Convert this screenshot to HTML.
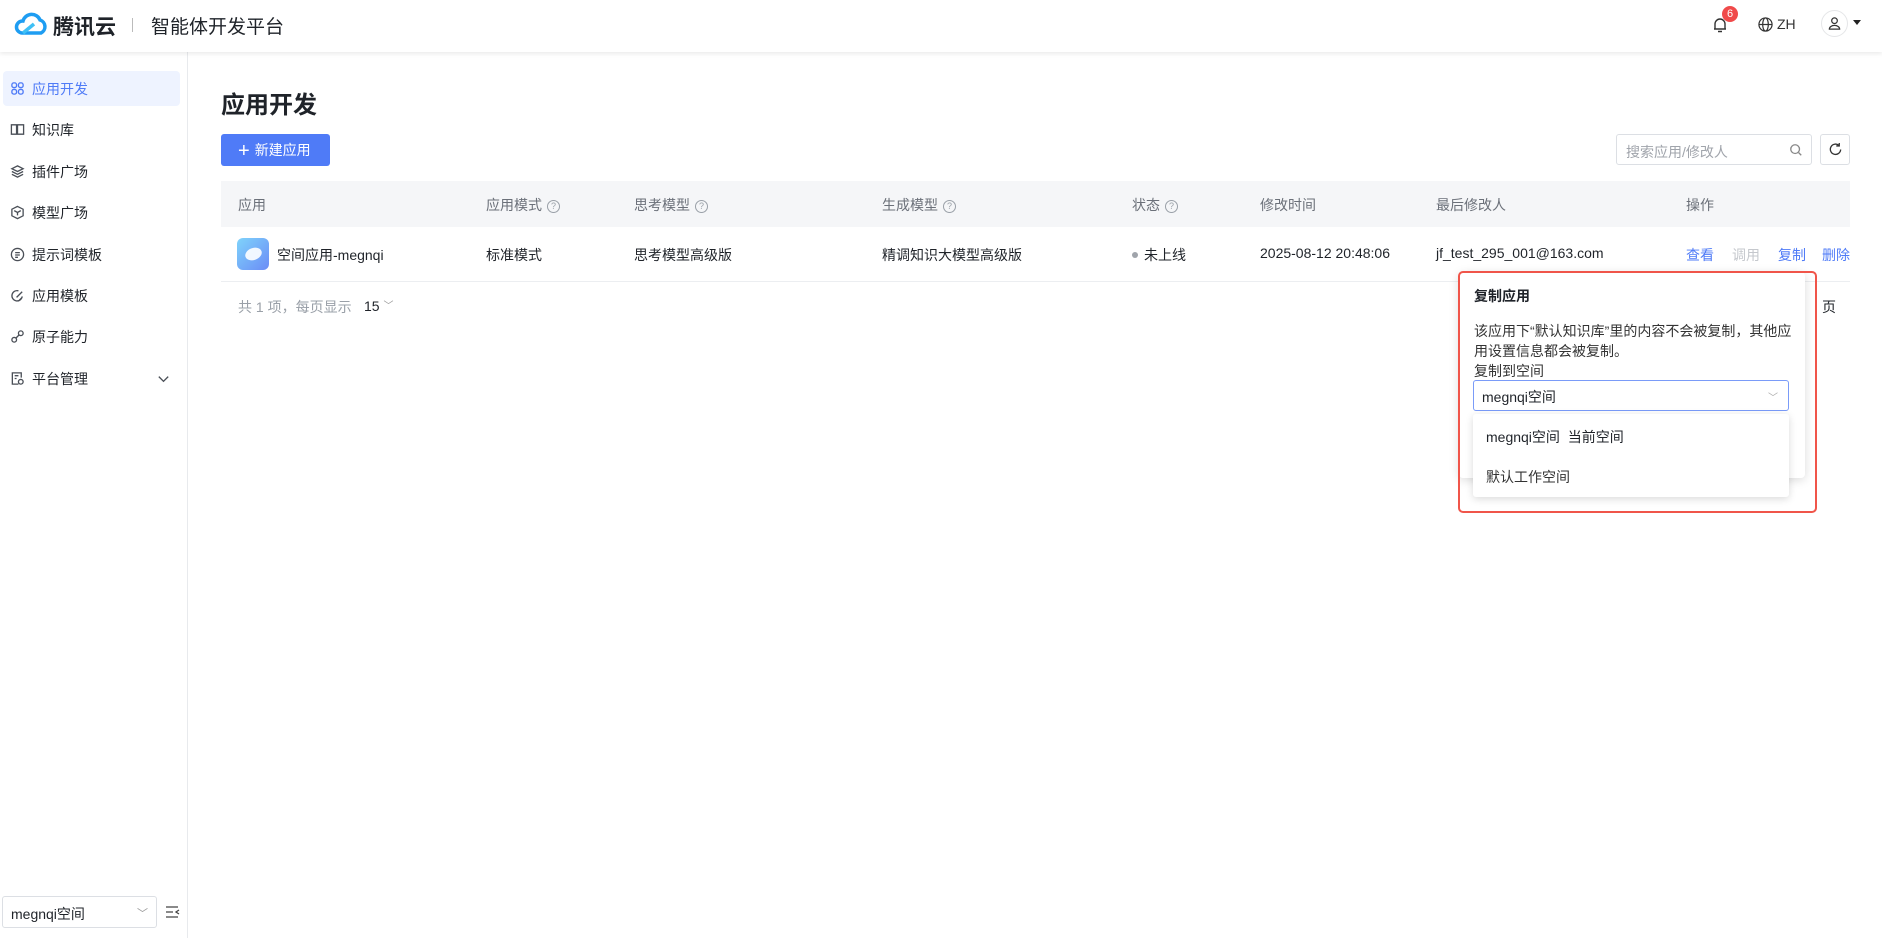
<!DOCTYPE html>
<html><head><meta charset="utf-8"><style>
*{box-sizing:border-box;margin:0;padding:0}
body{width:1882px;height:938px;overflow:hidden;background:#fff;font-family:"Liberation Sans","Noto Sans CJK SC",sans-serif;color:#1f2329;position:relative;font-size:14px}
.abs{position:absolute}
.hdr{left:0;top:0;width:1882px;height:52px;background:#fff;box-shadow:0 2px 4px rgba(0,0,0,.08);z-index:2}
.side{left:0;top:52px;width:188px;height:886px;border-right:1px solid #e8eaed}
.mi{position:absolute;left:3px;width:177px;height:35px;display:flex;align-items:center;padding-left:7px;font-size:14px;color:#1f2329}
.mi svg{width:15px;height:15px;margin-right:7px;fill:none;stroke:#4a4f57;stroke-width:1.4}
.mi.act{background:#eef3ff;color:#4f7bf7;border-radius:4px}
.mi.act svg{stroke:#4f7bf7}
.th{font-size:14px;color:#6b7079}
.td{font-size:14px;color:#1f2329}
.q{display:inline-block;width:13px;height:13px;border:1px solid #9aa0a8;border-radius:50%;font-size:9px;text-align:center;line-height:11px;color:#9aa0a8;margin-left:5px;vertical-align:1px}
</style></head><body>
<div class="abs hdr">
 <svg class="abs" style="left:14px;top:12px" width="34" height="24" viewBox="0 0 34 24"><path d="M8 21 A6 6 0 0 1 9 9 A9 9 0 0 1 26 8 A7 7 0 0 1 27 21 Z" fill="none" stroke="#1e9df2" stroke-width="3.5"/><path d="M9 21 L20 12" stroke="#3fc0f5" stroke-width="3.5"/></svg>
 <div class="abs" style="left:53px;top:11px;font-size:21px;font-weight:bold;color:#1f2329">腾讯云</div>
 <div class="abs" style="left:132px;top:18px;width:1px;height:14px;background:#bbb"></div>
 <div class="abs" style="left:151px;top:12px;font-size:19px;color:#1f2329">智能体开发平台</div>
 <svg class="abs" style="left:1712px;top:16px" width="16" height="18" viewBox="0 0 16 18" fill="none" stroke="#333" stroke-width="1.4"><path d="M3 13 V8 a5 5 0 0 1 10 0 V13 H2 H14 M6 15.5 h4"/></svg>
 <div class="abs" style="left:1722px;top:6px;width:16px;height:16px;border-radius:50%;background:#f04a4a;color:#fff;font-size:11px;text-align:center;line-height:16px">6</div>
 <svg class="abs" style="left:1758px;top:17px" width="15" height="15" viewBox="0 0 16 16" fill="none" stroke="#333" stroke-width="1.3"><circle cx="8" cy="8" r="7"/><ellipse cx="8" cy="8" rx="3" ry="7"/><path d="M1 8h14"/></svg>
 <div class="abs" style="left:1777px;top:16px;font-size:14px;color:#333">ZH</div>
 <div class="abs" style="left:1821px;top:10px;width:27px;height:27px;border-radius:50%;border:1px solid #e5e6e8"></div>
 <svg class="abs" style="left:1827px;top:16px" width="15" height="15" viewBox="0 0 16 16" fill="none" stroke="#333" stroke-width="1.3"><circle cx="8" cy="5" r="3"/><path d="M2.5 14 a5.5 4 0 0 1 11 0 Z"/></svg>
 <div class="abs" style="left:1853px;top:20px;border:4px solid transparent;border-top:5px solid #222"></div>
</div>
<div class="abs side">
 <div class="mi act" style="top:19px"><svg viewBox="0 0 16 16"><rect x="2" y="2" width="5" height="5" rx="2"/><rect x="9" y="2" width="5" height="5" rx="2"/><rect x="2" y="9" width="5" height="5" rx="2"/><rect x="9" y="9" width="5" height="5" rx="2"/></svg>应用开发</div>
 <div class="mi" style="top:60px"><svg viewBox="0 0 16 16"><path d="M1.5 3h5.5v10H1.5zM8 3h6.5v10H8z"/></svg>知识库</div>
 <div class="mi" style="top:102px"><svg viewBox="0 0 16 16"><path d="M8 2 L14 5 L8 8 L2 5Z M2 8 L8 11 L14 8 M2 11 L8 14 L14 11"/></svg>插件广场</div>
 <div class="mi" style="top:143px"><svg viewBox="0 0 16 16"><path d="M8 1.5 L14 4.5 V11.5 L8 14.5 L2 11.5 V4.5Z M4.5 6 L8 8 L11.5 6 M8 8 V11"/></svg>模型广场</div>
 <div class="mi" style="top:185px"><svg viewBox="0 0 16 16"><circle cx="8" cy="8" r="6.5"/><path d="M5.5 6h5M5.5 8.5h5M5.5 11h3"/></svg>提示词模板</div>
 <div class="mi" style="top:226px"><svg viewBox="0 0 16 16"><path d="M13 9 A5.5 5.5 0 1 1 9 3 M7 10 L13 4 M9 14 L13 10"/></svg>应用模板</div>
 <div class="mi" style="top:267px"><svg viewBox="0 0 16 16"><circle cx="4.5" cy="11.5" r="2.5"/><circle cx="11.5" cy="4.5" r="2.5"/><path d="M6 10 L10 6"/></svg>原子能力</div>
 <div class="mi" style="top:309px"><svg viewBox="0 0 16 16"><path d="M9 14H2.5V2H12V7 M5 5h4M5 8h2"/><circle cx="11.5" cy="11.5" r="2.5"/></svg>平台管理<svg style="position:absolute;left:153px;margin:0" viewBox="0 0 16 16"><path d="M3 6 L8 11 L13 6"/></svg></div>
 <div class="abs" style="left:2px;top:844px;width:155px;height:32px;border:1px solid #dcdfe4;border-radius:3px;padding:7px 8px;font-size:14px">megnqi空间<span style="position:absolute;right:8px;top:8px;color:#999;font-size:11px">﹀</span></div>
 <svg class="abs" style="left:164px;top:852px" width="16" height="16" viewBox="0 0 16 16" fill="none" stroke="#444" stroke-width="1.3"><path d="M2 3h12M2 8h7M2 13h12M15 6 L12 8 L15 10"/></svg>
</div>
<div class="abs" style="left:221px;top:85px;font-size:24px;font-weight:bold">应用开发</div>
<div class="abs" style="left:221px;top:134px;width:109px;height:32px;background:#4f7bf7;border-radius:3px;color:#fff;font-size:14px;line-height:32px;padding-left:17px"><span style="font-size:20px;vertical-align:-2px;margin-right:5px;font-weight:300">+</span>新建应用</div>
<div class="abs" style="left:1616px;top:134px;width:196px;height:31px;border:1px solid #dcdfe4;border-radius:3px;padding:7px 9px;color:#a0a4ab;font-size:14px">搜索应用/修改人</div>
<svg class="abs" style="left:1789px;top:143px" width="14" height="14" viewBox="0 0 16 16" fill="none" stroke="#888" stroke-width="1.5"><circle cx="7" cy="7" r="5"/><path d="M11 11 L14 14"/></svg>
<div class="abs" style="left:1820px;top:134px;width:30px;height:31px;border:1px solid #dcdfe4;border-radius:3px"></div>
<svg class="abs" style="left:1828px;top:142px" width="15" height="15" viewBox="0 0 16 16" fill="none" stroke="#333" stroke-width="1.4"><path d="M13.5 8 A5.5 5.5 0 1 1 11.5 3.5 M12 1 V4.2 H8.8"/></svg>
<div class="abs" style="left:221px;top:181px;width:1629px;height:46px;background:#f5f6f8"></div>
<div class="abs" style="left:221px;top:281px;width:1629px;height:1px;background:#eceef1"></div>
<div class="abs th" style="left:238px;top:195px">应用</div>
<div class="abs th" style="left:486px;top:195px">应用模式<span class="q">?</span></div>
<div class="abs th" style="left:634px;top:195px">思考模型<span class="q">?</span></div>
<div class="abs th" style="left:882px;top:195px">生成模型<span class="q">?</span></div>
<div class="abs th" style="left:1132px;top:195px">状态<span class="q">?</span></div>
<div class="abs th" style="left:1260px;top:195px">修改时间</div>
<div class="abs th" style="left:1436px;top:195px">最后修改人</div>
<div class="abs th" style="left:1686px;top:195px">操作</div>
<div class="abs" style="left:237px;top:238px;width:32px;height:32px;border-radius:6px;background:linear-gradient(135deg,#7fd3fb,#6b8cf6)"><div style="position:absolute;left:8px;top:10px;width:17px;height:12px;border-radius:50%;background:#fff;opacity:.9;transform:rotate(-20deg)"></div></div>
<div class="abs td" style="left:277px;top:245px">空间应用-megnqi</div>
<div class="abs td" style="left:486px;top:245px">标准模式</div>
<div class="abs td" style="left:634px;top:245px">思考模型高级版</div>
<div class="abs td" style="left:882px;top:245px">精调知识大模型高级版</div>
<div class="abs td" style="left:1132px;top:245px"><span style="display:inline-block;width:6px;height:6px;border-radius:50%;background:#a0a4ab;vertical-align:2px;margin-right:6px"></span>未上线</div>
<div class="abs td" style="left:1260px;top:245px">2025-08-12 20:48:06</div>
<div class="abs td" style="left:1436px;top:245px">jf_test_295_001@163.com</div>
<div class="abs td" style="left:1686px;top:245px;color:#4f7bf7">查看</div>
<div class="abs td" style="left:1732px;top:245px;color:#c5c8cd">调用</div>
<div class="abs td" style="left:1778px;top:245px;color:#4f7bf7">复制</div>
<div class="abs td" style="left:1822px;top:245px;color:#4f7bf7">删除</div>
<div class="abs" style="left:238px;top:297px;color:#9aa0a8;font-size:14px">共 1 项，每页显示</div>
<div class="abs" style="left:364px;top:297px;font-size:14px">15 <span style="color:#999;font-size:10px;vertical-align:2px">﹀</span></div>
<div class="abs" style="left:1822px;top:297px;font-size:14px">页</div>
<div class="abs" style="left:1459px;top:272px;width:346px;height:206px;background:#fff;border-radius:4px;box-shadow:0 2px 10px rgba(0,0,0,.15)"></div>
<div class="abs" style="left:1474px;top:286px;font-size:14px;font-weight:bold">复制应用</div>
<div class="abs" style="left:1474px;top:321px;width:320px;font-size:14px;line-height:20px;color:#333">该应用下“默认知识库”里的内容不会被复制，其他应用设置信息都会被复制。</div>
<div class="abs" style="left:1474px;top:361px;font-size:14px;color:#333">复制到空间</div>
<div class="abs" style="left:1473px;top:380px;width:316px;height:31px;border:1px solid #7a9bf8;border-radius:3px;padding:6px 8px;font-size:14px">megnqi空间<span style="position:absolute;right:10px;top:8px;color:#aaa;font-size:10px">﹀</span></div>
<div class="abs" style="left:1473px;top:414px;width:316px;height:83px;background:#fff;border-radius:3px;box-shadow:0 2px 8px rgba(0,0,0,.15)"></div>
<div class="abs" style="left:1486px;top:427px;font-size:14px">megnqi空间&nbsp;&nbsp;当前空间</div>
<div class="abs" style="left:1486px;top:467px;font-size:14px;color:#333">默认工作空间</div>
<div class="abs" style="left:1458px;top:271px;width:359px;height:242px;border:2px solid #f0554a;border-radius:5px"></div>
</body></html>
